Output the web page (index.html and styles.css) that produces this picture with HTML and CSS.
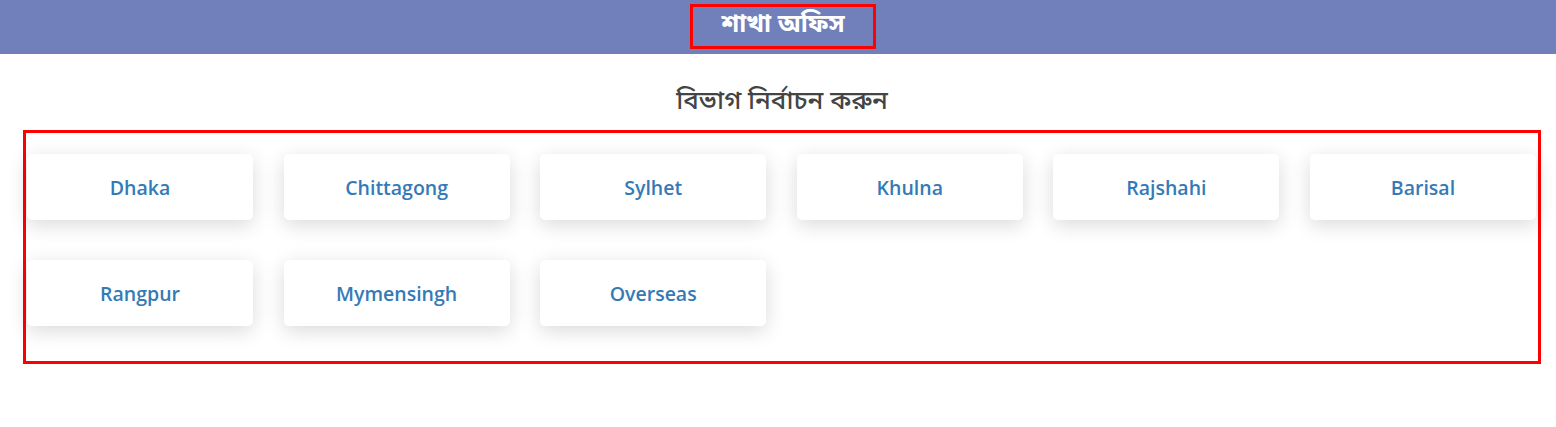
FILE: index.html
```html
<!DOCTYPE html>
<html lang="bn">
<head>
<meta charset="utf-8">
<title>শাখা অফিস</title>
<link rel="stylesheet" href="styles.css">
</head>
<body>
<header class="topbar">
  <h1 class="topbar-title">শাখা অফিস</h1>
</header>
<main class="page">
  <h2 class="section-title">বিভাগ নির্বাচন করুন</h2>
  <div class="division-box">
    <div class="division-grid">
      <a class="division-card" href="#">Dhaka</a>
      <a class="division-card" href="#">Chittagong</a>
      <a class="division-card" href="#">Sylhet</a>
      <a class="division-card" href="#">Khulna</a>
      <a class="division-card" href="#">Rajshahi</a>
      <a class="division-card" href="#">Barisal</a>
      <a class="division-card" href="#">Rangpur</a>
      <a class="division-card" href="#">Mymensingh</a>
      <a class="division-card" href="#">Overseas</a>
    </div>
  </div>
</main>
</body>
</html>
```
FILE: styles.css
```css
html, body {
  margin: 0;
  padding: 0;
  background: #ffffff;
}
body {
  font-family: "Open Sans", "Noto Sans Bengali", "Noto Sans", sans-serif;
}
.topbar {
  height: 54px;
  background: #717fba;
  display: flex;
  justify-content: center;
  align-items: flex-start;
}
.topbar-title {
  margin: 4px 0 0 10px;
  width: 186px;
  height: 45px;
  box-sizing: border-box;
  border: 3px solid #ff0000;
  color: #ffffff;
  font-size: 25px;
  font-weight: 700;
  display: flex;
  align-items: center;
  justify-content: center;
  padding-bottom: 6px;
}
.page {
  padding: 0 15px 0 23px;
}
.section-title {
  margin: 0;
  height: 76px;
  box-sizing: border-box;
  padding-top: 28px;
  text-align: center;
  font-size: 26px;
  font-weight: 500;
  color: #444444;
  line-height: 34px;
}
.division-box {
  border: 3px solid #ff0000;
  padding: 21px 2px 35px 1px;
}
.division-grid {
  display: grid;
  grid-template-columns: repeat(6, 1fr);
  column-gap: 30.5px;
  row-gap: 40px;
}
.division-card {
  height: 66px;
  background: #ffffff;
  border-radius: 5px;
  box-shadow: 0 5px 20px rgba(0, 0, 0, 0.15);
  display: flex;
  align-items: center;
  justify-content: center;
  color: #337ab7;
  font-size: 19.5px;
  font-weight: 600;
  text-decoration: none;
}
```
